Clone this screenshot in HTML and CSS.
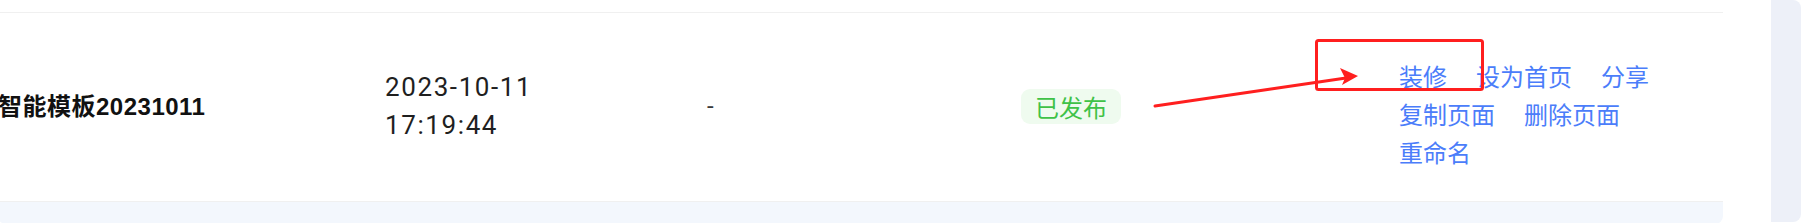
FILE: index.html
```html
<!DOCTYPE html>
<html lang="zh-CN">
<head>
  <meta charset="UTF-8" />
  <meta name="viewport" content="width=device-width, initial-scale=1.0"/>
  <title>页面管理</title>
  <link rel="stylesheet" href="styles.css">
</head>
<body>
  <div class="page">
    <div class="table-card">
      <div class="table-head"></div>

      <div class="table-row">
        <div class="cell cell-name">智能模板20231011</div>
        <div class="cell cell-time">2023-10-11<br>17:19:44</div>
        <div class="cell cell-empty">-</div>
        <div class="cell cell-status"><span class="tag-success">已发布</span></div>
        <div class="cell cell-actions">
          <a class="action" href="#">装修</a>
          <a class="action" href="#">设为首页</a>
          <a class="action" href="#">分享</a>
          <a class="action" href="#">复制页面</a>
          <a class="action" href="#">删除页面</a>
          <a class="action" href="#">重命名</a>
        </div>
      </div>

      <div class="table-row-next"></div>
    </div>

    <div class="side-panel"></div>
  </div>

  <!-- screenshot annotation: arrow + box around "装修" -->
  <svg class="annotation" width="1803" height="223" viewBox="0 0 1803 223">
    <rect x="1316.5" y="40.5" width="166" height="49" rx="2" fill="none" stroke="#ff1f1f" stroke-width="3"/>
    <line x1="1155" y1="106" x2="1346" y2="78" stroke="#ff1f1f" stroke-width="3" stroke-linecap="round"/>
    <polygon points="1358,76 1340,68 1345,78 1342,85" fill="#ff1f1f"/>
  </svg>
</body>
</html>
```

FILE: styles.css
```css
body, html {
  margin: 0;
  padding: 0;
  background-color: #fff;
  font-family: "Noto Sans CJK SC", sans-serif;
}

.page {
  display: flex;
  align-items: flex-start;
  width: 1803px;
  height: 223px;
  overflow: hidden;
}

.table-card {
  width: 1725px;
  margin-left: -2px;
  border-radius: 0 0 8px 8px;
  overflow: hidden;
}

.table-head {
  height: 12px;
  border-bottom: 1px solid #f0f0f0;
}

.table-row {
  display: grid;
  grid-template-columns: 387px 324px 312px 378px 300px 1fr;
  align-items: center;
  height: 188px;
  background: #fff;
}

.cell {
  font-size: 24px;
  line-height: 37.7px;
  color: #222;
}

.cell-name {
  font-family: "Liberation Sans", "Noto Sans CJK SC", sans-serif;
  font-weight: bold;
  letter-spacing: 0.5px;
  color: #111;
  margin-top: -1px;
}

.cell-time {
  font-family: Roboto, sans-serif;
  font-size: 26px;
  letter-spacing: 1.6px;
  color: #1f1f1f;
}

.cell-empty {
  font-family: Roboto, sans-serif;
  color: #3a3a3a;
  margin-left: -2px;
}

.tag-success {
  display: inline-block;
  height: 35px;
  line-height: 35px;
  padding: 0 14px;
  border-radius: 9px;
  background: #effbef;
  color: #3fc247;
}

.cell-actions {
  display: flex;
  flex-wrap: wrap;
  column-gap: 29px;
  padding-top: 14px;
}

.action {
  color: #4b7dfa;
  text-decoration: none;
}

.table-row-next {
  height: 22px;
  border-top: 1px solid #f0f0f0;
  background: #f3f7fd;
}

.side-panel {
  width: 30px;
  height: 222px;
  margin-left: 48px;
  background: #edf0f8;
  border-radius: 0 8px 8px 0;
}

.annotation {
  position: absolute;
  top: 0;
  left: 0;
  pointer-events: none;
}
```
